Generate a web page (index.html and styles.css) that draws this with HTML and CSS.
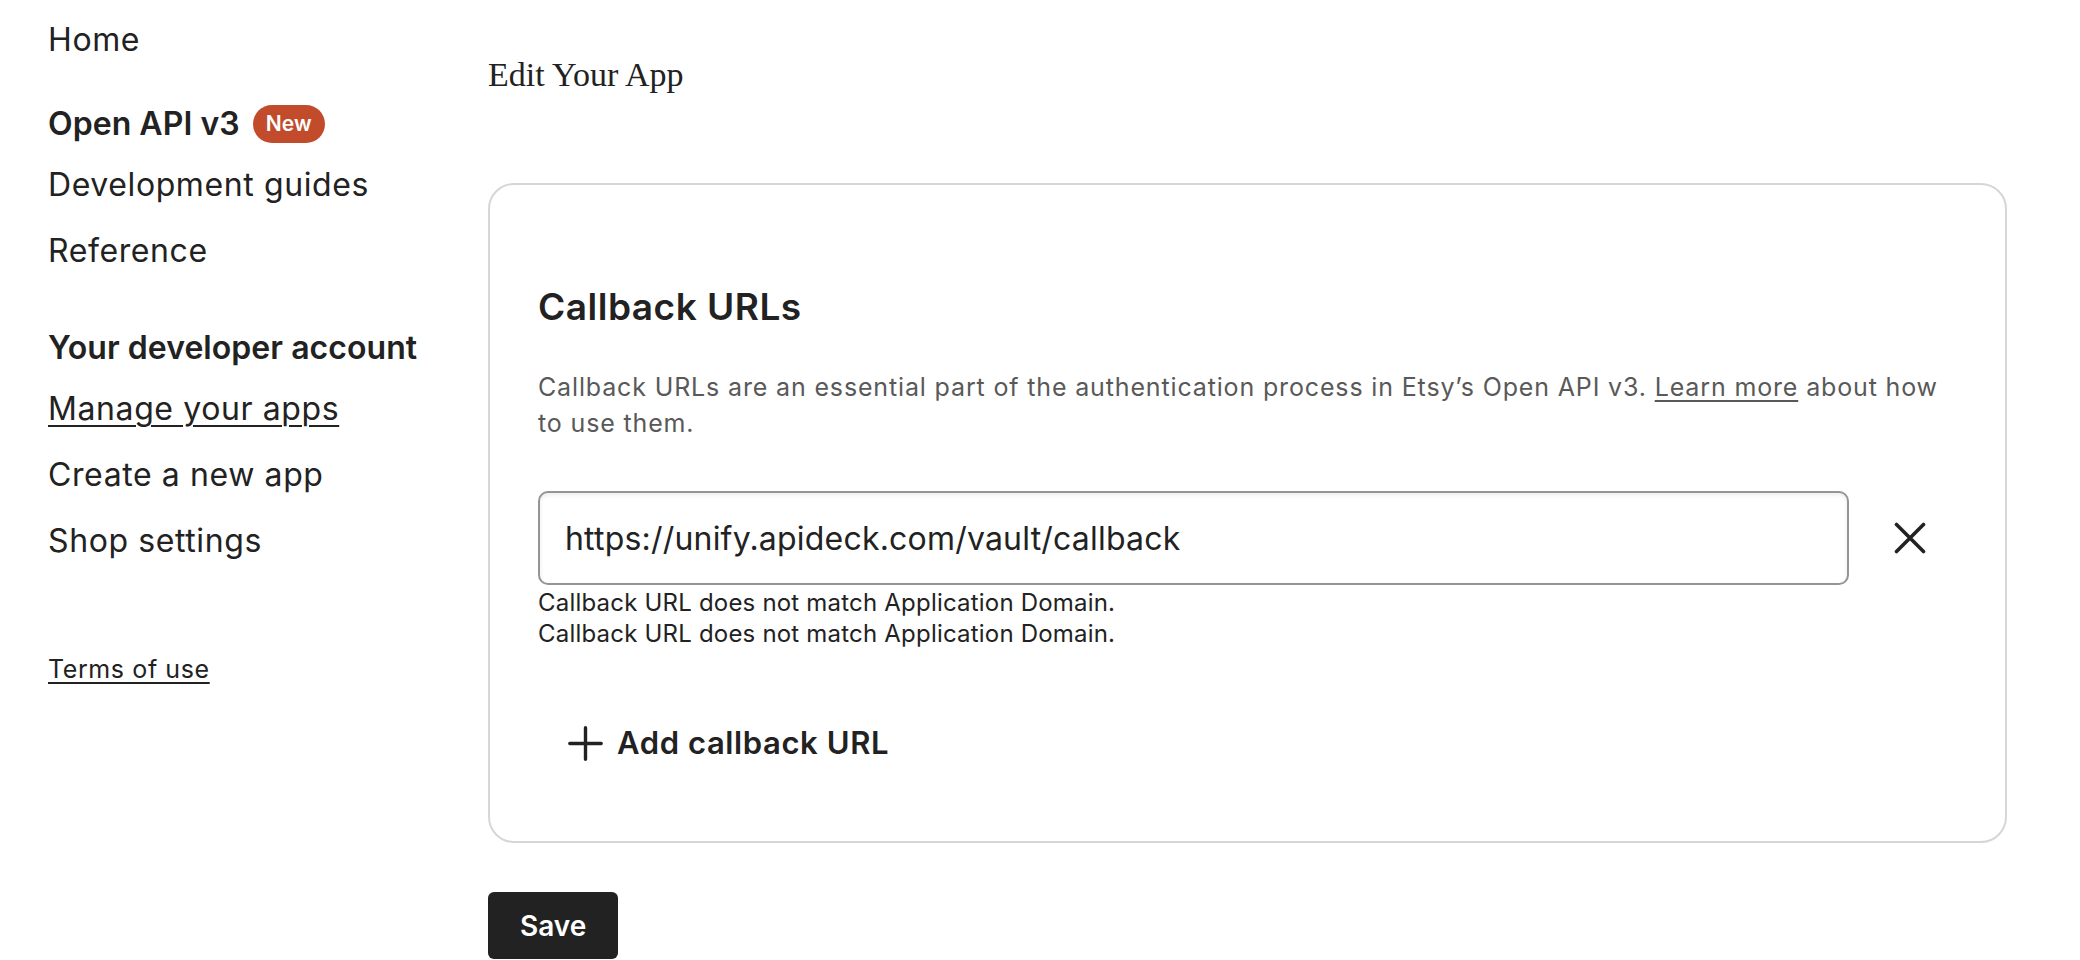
FILE: index.html
```html
<!DOCTYPE html>
<html lang="en">
<head>
<meta charset="utf-8">
<title>Edit Your App</title>
<link rel="stylesheet" href="styles.css">
</head>
<body>
<div class="page">
  <nav class="sidebar">
    <a class="nav-home" href="#">Home</a>
    <div class="nav-group nav-group-api">
      <div class="nav-title">Open API v3 <span class="badge">New</span></div>
      <a class="nav-link" href="#">Development guides</a>
      <a class="nav-link" href="#">Reference</a>
    </div>
    <div class="nav-group nav-group-account">
      <div class="nav-title">Your developer account</div>
      <a class="nav-link nav-current" href="#">Manage your apps</a>
      <a class="nav-link" href="#">Create a new app</a>
      <a class="nav-link" href="#">Shop settings</a>
    </div>
    <a class="nav-terms" href="#">Terms of use</a>
  </nav>
  <main class="main">
    <h1 class="page-title">Edit Your App</h1>
    <section class="card">
      <h2 class="card-title">Callback URLs</h2>
      <p class="card-desc">Callback URLs are an essential part of the authentication process in Etsy’s Open API v3. <a href="#" class="desc-link">Learn more</a> about how to use them.</p>
      <div class="url-row">
        <input class="url-input" type="text" value="https://unify.apideck.com/vault/callback">
        <button class="remove-btn" type="button" aria-label="Remove">
          <svg width="32" height="32" viewBox="0 0 32 32" fill="none" stroke="#222" stroke-width="3.6" stroke-linecap="round"><path d="M2.5 2.5 L29.5 29.5 M29.5 2.5 L2.5 29.5"/></svg>
        </button>
      </div>
      <div class="errors">
        <div class="error-line">Callback URL does not match Application Domain.</div>
        <div class="error-line">Callback URL does not match Application Domain.</div>
      </div>
      <button class="add-btn" type="button">
        <svg width="35" height="35" viewBox="0 0 35 35" fill="none" stroke="#222" stroke-width="3.4" stroke-linecap="round"><path d="M17.5 1.8 V33.2 M1.8 17.5 H33.2"/></svg>
        <span>Add callback URL</span>
      </button>
    </section>
    <button class="save-btn" type="button">Save</button>
  </main>
</div>
</body>
</html>
```

FILE: styles.css
```css
* {
  box-sizing: border-box;
}

html, body {
  margin: 0;
  padding: 0;
  background: #ffffff;
  color: #222222;
  font-family: Inter, "Noto Sans", "Liberation Sans", sans-serif;
  overflow: hidden;
}

.page {
  display: flex;
  align-items: flex-start;
  width: 2080px;
  height: 960px;
}

/* Sidebar */
.sidebar {
  width: 488px;
  flex: none;
  padding: 18px 0 0 48px;
  display: flex;
  flex-direction: column;
  align-items: flex-start;
}

.sidebar a {
  color: #222222;
  text-decoration: none;
}

.nav-home,
.nav-link,
.nav-title {
  display: block;
  font-size: 32px;
  line-height: 44px;
  height: 44px;
  white-space: nowrap;
  letter-spacing: 0.6px;
}

.nav-title {
  font-weight: 600;
  display: flex;
  align-items: center;
  letter-spacing: 0.05px;
}

.nav-group {
  display: flex;
  flex-direction: column;
  align-items: flex-start;
}

.nav-group-api {
  margin-top: 40px;
}

.nav-group-account {
  margin-top: 53px;
}

.nav-title + .nav-link {
  margin-top: 17px;
}

.nav-link + .nav-link {
  margin-top: 22px;
}

.sidebar a.nav-current {
  text-decoration: underline;
  text-decoration-thickness: 2px;
  text-underline-offset: 5px;
}

.badge {
  display: inline-flex;
  align-items: center;
  justify-content: center;
  height: 38px;
  padding: 0 13px;
  margin-left: 13px;
  border-radius: 19px;
  background: #c14b2b;
  color: #ffffff;
  font-size: 21px;
  font-weight: 600;
  letter-spacing: 0.2px;
}

.sidebar a.nav-terms {
  margin-top: 90px;
  font-size: 25px;
  line-height: 32px;
  letter-spacing: 0.6px;
  text-decoration: underline;
  text-decoration-thickness: 2px;
  text-underline-offset: 4px;
}

/* Main */
.main {
  width: 1519px;
  flex: none;
  padding-top: 55px;
}

.page-title {
  margin: 0;
  font-family: "Liberation Serif", "Times New Roman", serif;
  font-weight: 400;
  font-size: 34px;
  line-height: 40px;
  color: #222222;
}

.card {
  margin-top: 88px;
  border: 2px solid #d6d6d6;
  border-radius: 26px;
  padding: 100px 48px 66px 48px;
}

.card-title {
  margin: 0;
  font-size: 37px;
  line-height: 44px;
  font-weight: 600;
  letter-spacing: 0.5px;
}

.card-desc {
  margin: 40px 0 0 0;
  font-size: 25px;
  line-height: 36px;
  color: #595959;
  letter-spacing: 0.85px;
  max-width: 1415px;
}

.desc-link {
  color: #595959;
  text-decoration: underline;
  text-decoration-thickness: 2px;
  text-underline-offset: 4px;
}

.url-row {
  margin-top: 50px;
  display: flex;
  align-items: center;
  gap: 37px;
}

.url-input {
  width: 1311px;
  height: 94px;
  border: 2px solid #959595;
  border-radius: 10px;
  padding: 0 25px;
  font-family: Inter, "Noto Sans", "Liberation Sans", sans-serif;
  font-size: 32px;
  letter-spacing: 0.2px;
  color: #222222;
  background: #ffffff;
  box-shadow: inset 0 2px 4px rgba(0, 0, 0, 0.08);
  outline: none;
}

.remove-btn {
  width: 48px;
  height: 48px;
  padding: 0;
  border: 0;
  background: transparent;
  display: flex;
  align-items: center;
  justify-content: center;
}

.errors {
  margin-top: 2px;
}

.error-line {
  font-size: 24px;
  line-height: 31px;
  letter-spacing: 0.2px;
  color: #222222;
}

.add-btn {
  margin-top: 62px;
  display: flex;
  align-items: center;
  gap: 14px;
  padding: 12px 30px;
  border: 0;
  background: transparent;
  font-family: Inter, "Noto Sans", "Liberation Sans", sans-serif;
  font-size: 31px;
  line-height: 40px;
  font-weight: 600;
  color: #222222;
  letter-spacing: 0.6px;
}

.save-btn {
  margin-top: 49px;
  height: 67px;
  padding: 0 32px;
  border: 0;
  border-radius: 6px;
  background: #222222;
  color: #ffffff;
  font-family: Inter, "Noto Sans", "Liberation Sans", sans-serif;
  font-size: 28px;
  font-weight: 600;
}
```
